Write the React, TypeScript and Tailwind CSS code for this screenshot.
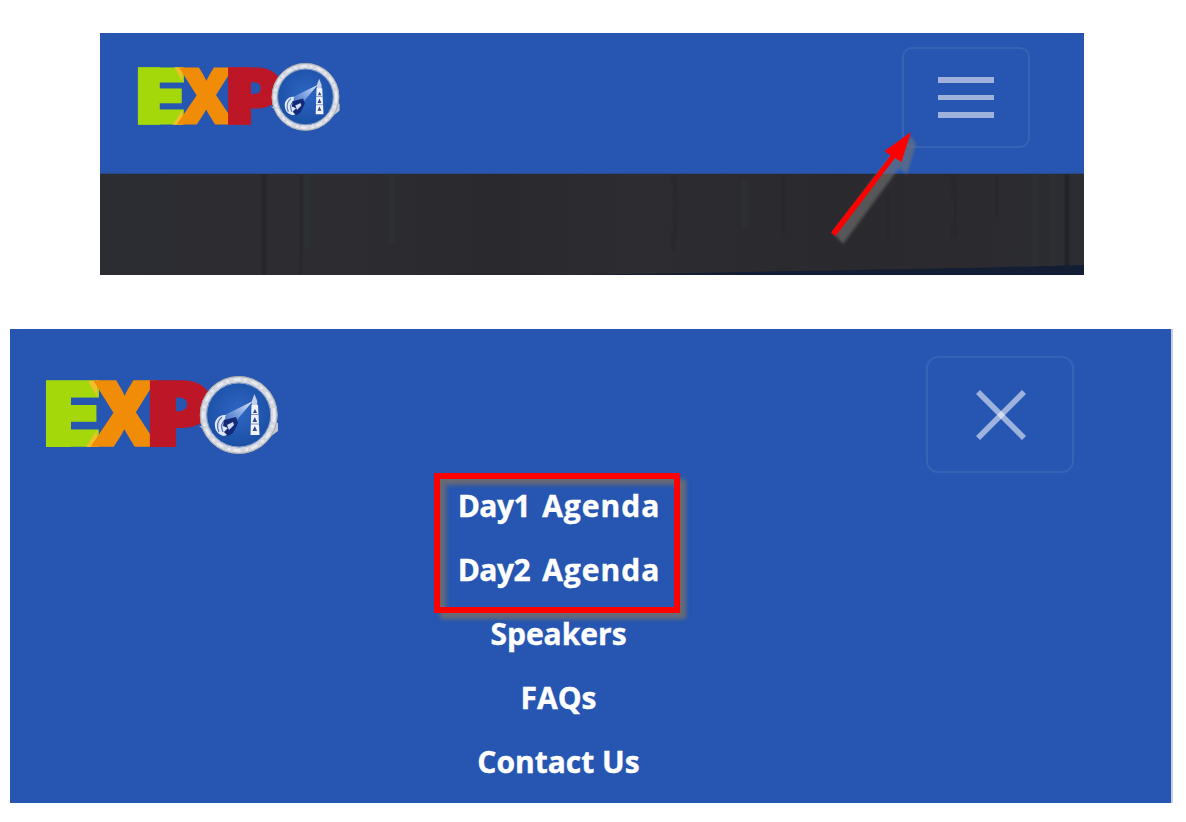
const menuItems = ['Speakers', 'FAQs', 'Contact Us'];

const lettering = {
  fontFamily: 'Inter, sans-serif',
  fontWeight: 900,
  fontSize: 86,
};

function Logo({ id, className }: { id: string; className: string }) {
  return (
    <svg viewBox="0 0 233 80" className={className} aria-label="Expo">
      <defs>
        <radialGradient id={`${id}-disc`} cx="0.5" cy="0.45" r="0.6">
          <stop offset="0" stopColor="#2f66c4" />
          <stop offset="1" stopColor="#174b9f" />
        </radialGradient>
        <linearGradient id={`${id}-beam`} x1="1" y1="0" x2="0" y2="1">
          <stop offset="0" stopColor="#e8f0ff" />
          <stop offset="1" stopColor="#5f8cdd" stopOpacity="0.2" />
        </linearGradient>
      </defs>
      <g {...lettering} strokeWidth="3.5">
        <path d="M0 5h25v66H0z" fill="#a5d80a" />
        <text transform="translate(-2.500 69.250) scale(1.090 1)" fill="#a5d80a" stroke="#a5d80a">E</text>
        <path d="M42 5h9v16zM51 54v17H40z" fill="#f0c02c" />
        <text transform="translate(46 69.250) scale(0.960 1)" fill="#f08c08" stroke="#f08c08">X</text>
        <path d="M104 5h26v66h-26z" fill="#bd1626" />
        <text transform="translate(101.300 69.250) scale(1.147 1)" fill="#bd1626" stroke="#bd1626">P</text>
      </g>
      <path d="M153 50l9 7 5-5zM226 46l6 1v8l-8 6z" fill="#c3c7d2" />
      <circle cx="192.7" cy="39" r="35.5" fill={`url(#${id}-disc)`} stroke="#d3d6df" strokeWidth="6.500" />
      <circle cx="192.7" cy="39" r="38.5" fill="none" stroke="#a7a8a8" strokeWidth="1" />
      <circle cx="192.7" cy="39" r="32" fill="none" stroke="#8da3c9" strokeWidth="1" />
      <circle cx="192.7" cy="39" r="35.5" fill="none" stroke="#e9ebf0" strokeWidth="2.500" strokeDasharray="7 3 3 5" />
      <path d="M207 25L171 43l13 9z" fill={`url(#${id}-beam)`} />
      <path d="M180 39c-7-1-12 5-11 11 0 5 4 9 9 10l5-2-4-17z" fill="#dfe7f5" />
      <path d="M176 41q-7 6-3 15M180 43q-7 5-3 13" fill="none" stroke="#5577bd" strokeWidth="1.300" />
      <path d="M178 44l12-3 2 6-5 10-5 3-4-4 4-4-5-2z" fill="#142a78" />
      <path d="M181 49l6-3 1 3-5 5z" fill="#cfdcf2" />
      <path d="M208.500 18l2.700 7v5h-5.400v-5z" fill="#c3d0ea" />
      <path d="M205.500 29h6.500l1.500 30h-9z" fill="#f0f3fb" />
      <path d="M207 37l2-4 2 4zM206.500 46l2.300-5 2.300 5zM206.500 55l2.300-5 2.300 5z" fill="#2c4d8d" />
      <path d="M205 38.500h7.500M205 48h8" stroke="#7b93c1" strokeWidth="1" />
    </svg>
  );
}

function CollapsedHeader() {
  return (
    <section className="relative ml-[100px] h-[242px] w-[984px] bg-[#2b2b30]">
      <header className="flex h-[141px] items-start justify-between border-b border-[#27498a] bg-[#2656b1] pr-[54px] pl-[38px]">
        <Logo id="collapsed" className="mt-[30px] h-[69.500px] w-[202.500px] overflow-visible" />
        <button aria-label="Open menu" className="mt-[14px] flex h-[101px] w-[128px] flex-col items-center justify-center gap-[11.500px] rounded-[10px] border-2 border-white/8">
          <span className="h-[5.800px] w-[56px] bg-[#9fb2dc]" />
          <span className="h-[5.800px] w-[56px] bg-[#9fb2dc]" />
          <span className="h-[5.800px] w-[56px] bg-[#9fb2dc]" />
        </button>
      </header>
      <svg viewBox="0 0 984 101" className="block h-[101px] w-[984px]" aria-hidden="true">
        <defs>
          <linearGradient id="wood">
            <stop offset="0" stopColor="#2b2d32" />
            <stop offset="0.1" stopColor="#2c2c31" />
            <stop offset="0.25" stopColor="#2d2c31" />
            <stop offset="0.4" stopColor="#2a292e" />
            <stop offset="0.55" stopColor="#2d2d31" />
            <stop offset="0.75" stopColor="#2a292d" />
            <stop offset="1" stopColor="#2c2d31" />
          </linearGradient>
          <filter id="grain" filterUnits="userSpaceOnUse" x="0" y="0" width="984" height="101">
            <feGaussianBlur stdDeviation="1" />
          </filter>
        </defs>
        <path d="M0 0h984v101H0z" fill="url(#wood)" />
        <g filter="url(#grain)" fill="none">
          <path d="M164 0v101" stroke="#232328" strokeWidth="2" />
          <path d="M967 0v101" stroke="#1d1d21" strokeWidth="2.500" />
          <path d="M201 0v101M574 0q4 35-1 75M684 0v60M788 20v45M852 0q5 25 2 65M897 0v42" stroke="#27272b" strokeWidth="2.500" />
          <path d="M292 0v70M645 5v50M207 0v75M935 0v101M953 0v101" stroke="#2f3034" strokeWidth="4" />
        </g>
        <path d="M480 101C690 97 860 95 984 91v10z" fill="#131d34" />
      </svg>
      <svg viewBox="0 0 110 130" className="absolute top-[87px] left-[720px] h-[130px] w-[110px]" aria-hidden="true">
        <defs>
          <filter id="arrow-shadow" x="-20%" y="-20%" width="150%" height="150%">
            <feGaussianBlur stdDeviation="1.800" />
          </filter>
        </defs>
        <path d="M13 113l58-78 20-19 5 8-9 30-8-6-56 76z" fill="#757575" opacity="0.600" filter="url(#arrow-shadow)" />
        <path d="M11 112.500L70.700 35.500 64.500 31 91 12 81.500 42l-6.500-4L15.500 116z" fill="#ff0000" />
      </svg>
    </section>
  );
}

function AgendaLink({ day }: { day: string }) {
  return (
    <a className="flex gap-[12px] whitespace-nowrap">
      <span className="tracking-[-0.500px]">{day}</span>
      <span className="tracking-[1px]">Agenda</span>
    </a>
  );
}

function ExpandedHeader() {
  return (
    <section className="mt-[54px] ml-[10px] h-[474px] w-[1163px] border-r-2 border-[#c5cdeb] bg-[#2656b1] pr-[97px] pl-[36px]">
      <header className="flex h-[144px] items-start justify-between">
        <Logo id="expanded" className="mt-[47px] h-[80px] w-[233px] overflow-visible" />
        <button aria-label="Close menu" className="mt-[27px] flex h-[117px] w-[148px] items-center justify-center rounded-[12px] border-2 border-white/8 pl-[2px]">
          <svg viewBox="0 0 50 50" className="h-[50px] w-[50px]" aria-hidden="true">
            <path d="M2 2l46 46" stroke="white" strokeOpacity="0.550" strokeWidth="5.800" />
            <path d="M48 2L2 48" stroke="white" strokeOpacity="0.550" strokeWidth="5.800" />
          </svg>
        </button>
      </header>
      <nav className="flex flex-col items-center pr-[3px] font-['Open_Sans',sans-serif] text-[30px] leading-[64px] font-bold text-white [-webkit-text-stroke:0.4px_white]">
        <div className="mr-[3px] flex h-[140px] w-[246px] flex-col items-center border-6 border-[#ff0000] pl-[4px] shadow-[6px_6px_4px_#686a75,inset_6px_6px_4px_#686a75]">
          <div className="-mt-[5px]">
            <AgendaLink day="Day1" />
            <AgendaLink day="Day2" />
          </div>
        </div>
        <div className="-mt-[11px] flex flex-col items-center">
          {menuItems.map((item) => (
            <a key={item} className="whitespace-nowrap">{item}</a>
          ))}
        </div>
      </nav>
    </section>
  );
}

export default function App() {
  return (
    <main className="h-[822px] w-[1186px] overflow-hidden bg-white pt-[33px]">
      <CollapsedHeader />
      <ExpandedHeader />
    </main>
  );
}
